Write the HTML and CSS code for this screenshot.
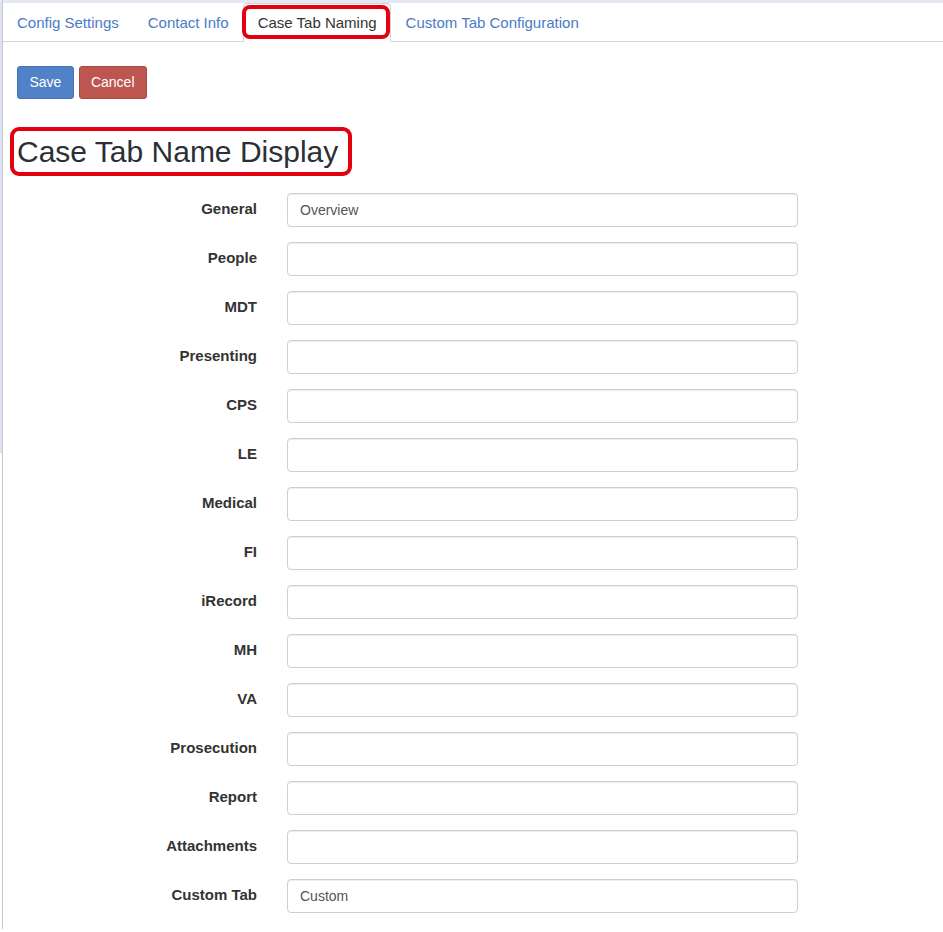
FILE: index.html
```html
<!DOCTYPE html>
<html>
<head>
<meta charset="utf-8">
<title>Case Tab Naming</title>
<link rel="stylesheet" href="styles.css">
</head>
<body>
<div class="panel">
  <ul class="tabs">
    <li class="tab"><a href="#">Config Settings</a></li>
    <li class="tab"><a href="#">Contact Info</a></li>
    <li class="tab active"><a href="#">Case Tab Naming</a></li>
    <li class="tab"><a href="#">Custom Tab Configuration</a></li>
  </ul>
  <div class="content">
    <div class="actions">
      <button class="btn btn-primary">Save</button>
      <button class="btn btn-danger">Cancel</button>
    </div>
    <h2 class="title">Case Tab Name Display</h2>
    <form class="form">
      <label class="label">General</label><input class="input" type="text" value="Overview">
      <label class="label">People</label><input class="input" type="text">
      <label class="label">MDT</label><input class="input" type="text">
      <label class="label">Presenting</label><input class="input" type="text">
      <label class="label">CPS</label><input class="input" type="text">
      <label class="label">LE</label><input class="input" type="text">
      <label class="label">Medical</label><input class="input" type="text">
      <label class="label">FI</label><input class="input" type="text">
      <label class="label">iRecord</label><input class="input" type="text">
      <label class="label">MH</label><input class="input" type="text">
      <label class="label">VA</label><input class="input" type="text">
      <label class="label">Prosecution</label><input class="input" type="text">
      <label class="label">Report</label><input class="input" type="text">
      <label class="label">Attachments</label><input class="input" type="text">
      <label class="label">Custom Tab</label><input class="input" type="text" value="Custom">
    </form>
  </div>
</div>
</body>
</html>
```
FILE: styles.css
```css
html, body {
  margin: 0;
  padding: 0;
}
body {
  font-family: "Liberation Sans", Arial, sans-serif;
  color: #333;
  background:
    linear-gradient(#e3e8f2, #e3e8f2) 0 0 / 100% 3px no-repeat,
    linear-gradient(#dce3f0, #dce3f0) 0 0 / 2px 453px no-repeat,
    #fff;
  min-height: 932px;
}
.panel {
  margin-left: 2px;
  border-left: 1px solid #c9c9c9;
  padding-top: 3px;
  min-height: 929px;
  box-sizing: border-box;
}
.tabs {
  display: flex;
  list-style: none;
  margin: 0;
  padding: 0;
  border-bottom: 1px solid #d4d4d4;
}
.tab {
  margin-bottom: -1px;
  margin-right: 0;
}
.tab a {
  display: block;
  font-size: 15px;
  line-height: 17px;
  padding: 10px 13.5px;
  border: 1px solid transparent;
  border-radius: 4px 4px 0 0;
  color: #4b7bc5;
  text-decoration: none;
}
.tab:first-child a {
  padding-left: 13px;
}
.tab.active a {
  position: relative;
  color: #333;
  background: #fff;
  border-color: #d4d4d4 #d4d4d4 transparent;
}
.tab.active a::after {
  content: "";
  position: absolute;
  left: -2px;
  right: 0;
  top: 1px;
  bottom: 2px;
  border: 4px solid #e3000f;
  border-radius: 8px;
}
.content {
  padding: 0 14px;
}
.actions {
  display: flex;
  gap: 5px;
  margin-top: 24px;
}
.btn {
  font-family: "Liberation Sans", Arial, sans-serif;
  font-size: 14px;
  line-height: 19px;
  padding: 6px 11.5px;
  border: 1px solid transparent;
  border-radius: 3px;
  color: #fff;
  cursor: pointer;
}
.btn-danger {
  padding: 6px 11px;
}
.btn-primary {
  background: #5181c7;
  border-color: #4572b5;
}
.btn-danger {
  background: #bd5650;
  border-color: #a84843;
}
.title {
  position: relative;
  display: inline-block;
  font-size: 30px;
  font-weight: normal;
  line-height: 33px;
  margin: 36px 0 0;
  color: #2b2f36;
}
.title::after {
  content: "";
  position: absolute;
  left: -7px;
  right: -14px;
  top: -8px;
  bottom: -8px;
  border: 4px solid #e3000f;
  border-radius: 9px;
}
.form {
  display: grid;
  grid-template-columns: 240px 511px;
  column-gap: 30px;
  row-gap: 15px;
  margin-top: 25px;
}
.label {
  text-align: right;
  font-weight: bold;
  font-size: 15px;
  line-height: 17px;
  padding-top: 7px;
  color: #333;
}
.input {
  box-sizing: border-box;
  width: 511px;
  height: 34px;
  padding: 6px 12px;
  font-family: "Liberation Sans", Arial, sans-serif;
  font-size: 14px;
  line-height: 20px;
  color: #555;
  background: #fff;
  border: 1px solid #cfcfcf;
  border-radius: 4px;
  box-shadow: inset 0 1px 1px rgba(0, 0, 0, 0.075);
  margin: 0;
}
```
